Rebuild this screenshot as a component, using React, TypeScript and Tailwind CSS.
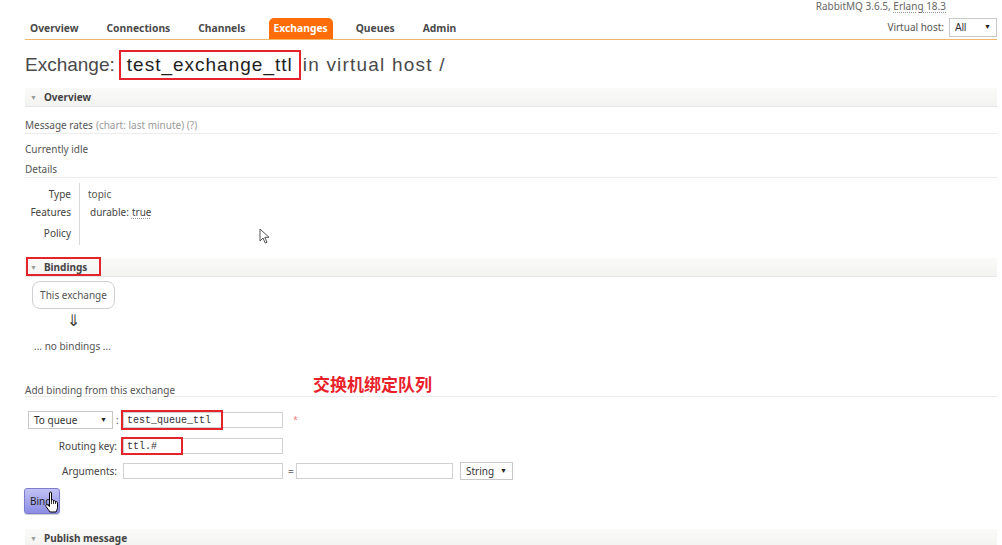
import React from 'react';

function SectionHeader({ title, boxed }: { title: string; boxed?: boolean }) {
  return (
    <div className="relative flex h-[19px] items-center border-b border-[#e6e6e6] bg-gradient-to-b from-[#fafaf9] to-[#f3f3f1] pl-[5px]">
      <span className="text-[7px] leading-none text-[#9a9a9a]">▼</span>
      <span className="ml-[7px] text-[10px] font-bold text-[#444]">{title}</span>
      {boxed && (
        <div className="absolute left-[1px] top-[-1px] h-[19px] w-[75px] border-2 border-[#e4232b]" />
      )}
    </div>
  );
}

function Select({ label, className }: { label: string; className: string }) {
  return (
    <div
      className={`flex items-center justify-between border border-[#c8c8c8] bg-white pl-[5px] pr-[5px] text-[10px] text-[#333] ${className}`}
    >
      <span>{label}</span>
      <span className="text-[7px] text-[#222]">▼</span>
    </div>
  );
}

function TextInput({ value, className }: { value?: string; className: string }) {
  return (
    <div
      className={`flex items-center border border-[#d0d0d0] bg-white pl-[3px] font-['Liberation_Mono',monospace] text-[10px] text-[#333] ${className}`}
    >
      {value}
    </div>
  );
}

export default function App() {
  return (
    <div className="relative h-[545px] w-[1002px] overflow-hidden bg-white font-['Noto_Sans',sans-serif] text-[10px] text-[#555]">
      <div className="pl-[25px] pr-[5px]">
        {/* top line */}
        <div className="flex h-[17px] items-start justify-end pr-[51px]">
          <span className="leading-[13px] text-[#666]">
            RabbitMQ 3.6.5,{' '}
            <span className="underline decoration-dotted decoration-[#999] underline-offset-2">Erlang 18.3</span>
          </span>
        </div>

        {/* nav */}
        <div className="flex h-[23px] items-end justify-between border-b border-[#f2b766]">
          <div className="flex items-end gap-[18px] text-[10.3px] font-bold text-[#4a4a4a]">
            <span className="flex h-[21px] items-center px-[5px]">Overview</span>
            <span className="flex h-[21px] items-center px-[5px]">Connections</span>
            <span className="flex h-[21px] items-center px-[5px]">Channels</span>
            <span className="flex h-[21px] items-center rounded-t-[5px] bg-[#ff6d0a] px-[5px] text-white">Exchanges</span>
            <span className="flex h-[21px] items-center px-[5px]">Queues</span>
            <span className="flex h-[21px] items-center px-[5px]">Admin</span>
          </div>
          <div className="mb-[2px] flex items-center gap-[5px]">
            <span className="text-[#555]">Virtual host:</span>
            <Select label="All" className="h-[19px] w-[48px] font-['Liberation_Sans',sans-serif]" />
          </div>
        </div>

        {/* title */}
        <div className="mt-[10px] flex h-[30px] items-center font-['Liberation_Sans',sans-serif] text-[19px] text-[#4a4a4a]">
          <span>Exchange:</span>
          <span className="ml-[4px] flex h-[30px] items-center border-2 border-[#e4232b] px-[6px] tracking-[1px] text-[#1e1e1e]">
            test_exchange_ttl
          </span>
          <span className="ml-[2px] tracking-[1.2px]">in virtual host /</span>
        </div>

        <div className="mt-[8px]">
          <SectionHeader title="Overview" />
        </div>

        <div className="mt-[10px] flex h-[17px] items-center border-b border-[#ececec] pt-[1px]">
          <span>Message rates</span>
          <span className="ml-[3px] text-[#9a9a9a]">(chart: last minute) (?)</span>
        </div>
        <div className="mt-[7px] flex h-[16px] items-center">Currently idle</div>
        <div className="mt-[5px] flex h-[16px] items-center border-b border-[#ececec]">Details</div>

        <div className="mt-[5px] flex">
          <div className="w-[55px] border-r border-[#d8d8d8] pr-[8px] text-right text-[#444]">
            <div className="flex h-[19px] items-center justify-end pt-[3px]">Type</div>
            <div className="flex h-[19px] items-center justify-end pt-[1px]">Features</div>
            <div className="flex h-[24px] items-center justify-end">Policy</div>
          </div>
          <div className="pl-[8px]">
            <div className="flex h-[19px] items-center pt-[3px]">topic</div>
            <div className="flex h-[19px] items-center pl-[2px] pt-[1px] text-[#444]">
              durable:{' '}
              <span className="ml-[3px] underline decoration-dotted decoration-[#999] underline-offset-2">true</span>
            </div>
            <div className="h-[24px]" />
          </div>
        </div>

        <div className="mt-[13px]">
          <SectionHeader title="Bindings" boxed />
        </div>

        <div className="ml-[7px] mt-[4px] flex h-[28px] w-[83px] items-center justify-center rounded-[8px] border border-[#cfcfcf] pt-[1px] text-[#555]">
          This exchange
        </div>
        <div className="ml-[7px] mt-[5px] flex h-[14px] w-[83px] items-center justify-center font-['DejaVu_Sans',sans-serif] text-[16px] text-[#3a3a3a]">
          ⇓
        </div>
        <div className="mt-[11px] flex h-[14px] items-center pl-[9px] pt-[1px]">... no bindings ...</div>

        <div className="mt-[29px] flex h-[15px] items-center border-b border-[#ececec] pt-[2px]">
          Add binding from this exchange
        </div>

        {/* form */}
        <div className="mt-[14px] flex h-[18px] items-center">
          <div className="flex w-[96px] items-center">
            <Select label="To queue" className="ml-[3px] h-[18px] w-[85px]" />
            <span className="ml-[3px]">:</span>
          </div>
          <div className="relative ml-[2px]">
            <TextInput value="test_queue_ttl" className="h-[16px] w-[160px]" />
            <div className="absolute left-[-2px] top-[-2px] h-[20px] w-[102px] border-2 border-[#e4232b]" />
          </div>
          <span className="ml-[10px] text-[9px] text-[#f08080]">*</span>
        </div>

        <div className="mt-[9px] flex h-[16px] items-center">
          <div className="w-[96px] pr-[4px] text-right text-[#444]">Routing key:</div>
          <div className="relative ml-[2px]">
            <TextInput value="ttl.#" className="h-[16px] w-[160px]" />
            <div className="absolute left-[-2px] top-[-1px] h-[18px] w-[62px] border-2 border-[#e4232b]" />
          </div>
        </div>

        <div className="mt-[8px] flex h-[18px] items-center">
          <div className="w-[96px] pr-[4px] text-right text-[#444]">Arguments:</div>
          <TextInput className="ml-[2px] h-[16px] w-[160px]" />
          <span className="ml-[5px] w-[8px] text-[#777]">=</span>
          <TextInput className="h-[16px] w-[157px]" />
          <Select label="String" className="ml-[7px] h-[18px] w-[53px]" />
        </div>

        <div className="relative mt-[8px] h-[26px] w-[36px] -ml-[1px]">
          <div className="flex h-[26px] w-[36px] items-center rounded-[3px] border border-[#7d7dd0] bg-gradient-to-b from-[#c2c2f4] to-[#8c8ce4] pl-[5px] text-[10px] text-[#222] shadow-[0_1px_1px_rgba(0,0,0,0.2)]">
            Bind
          </div>
          {/* hand cursor */}
          <svg className="absolute left-[20px] top-[3px]" width="16" height="23" viewBox="0 0 16 23">
            <path
              d="M5.5 2C5.5 0.8 7.5 0.8 7.5 2V9.5C7.5 8.5 9.5 8.5 9.5 9.5V10.5C9.5 9.5 11.5 9.5 11.5 10.5V11.5C11.5 10.5 13.5 10.5 13.5 11.5V16.5C13.5 18.5 12.5 19.5 12 21H6C5 19.5 3.5 17.5 2 15.5C1.2 14.4 2.4 13 3.4 13.8L5.5 15.5Z"
              fill="#fff"
              stroke="#000"
              strokeWidth="1"
              strokeLinejoin="round"
            />
            <path d="M7.5 9.5V13M9.5 10.5V13M11.5 11.5V13" stroke="#000" strokeWidth="0.8" fill="none" />
          </svg>
        </div>

        <div className="mt-[15px]">
          <SectionHeader title="Publish message" />
        </div>
      </div>

      {/* annotation */}
      <div className="absolute left-[313px] top-[374px] font-['Noto_Sans_CJK_SC',sans-serif] text-[17px] font-bold leading-[20px] text-[#e8202a]">
        交换机绑定队列
      </div>

      {/* arrow cursor */}
      <svg className="absolute left-[259px] top-[228px]" width="12" height="16" viewBox="0 0 12 16">
        <path d="M1 1v12l3-3 2.2 5 1.8-.8-2.2-4.9H10L1 1z" fill="#fff" stroke="#555" strokeWidth="1" />
      </svg>
    </div>
  );
}
